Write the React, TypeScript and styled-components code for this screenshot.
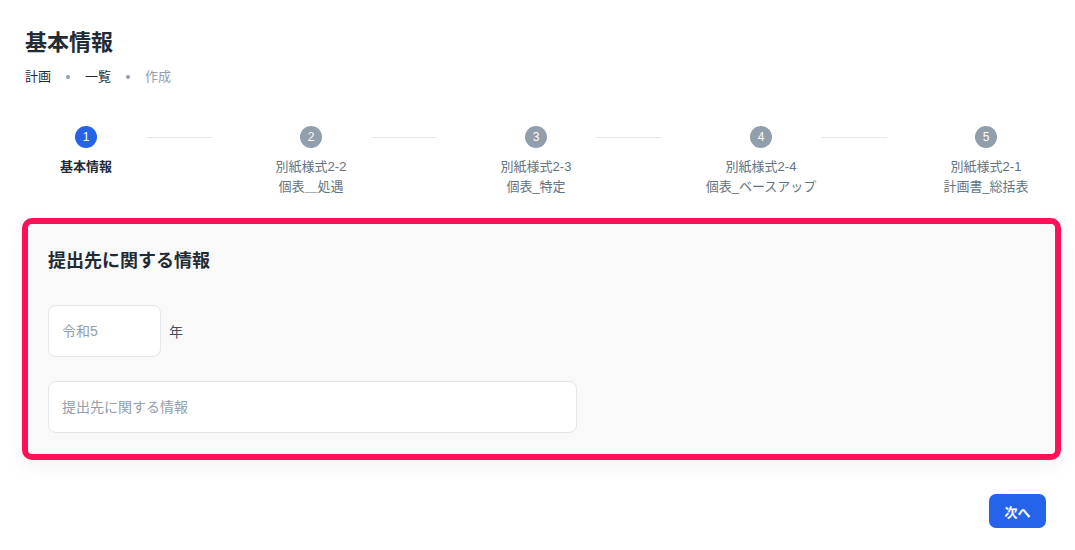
import React from 'react';
import styled, { createGlobalStyle } from 'styled-components';

const GlobalStyle = createGlobalStyle`
  html, body {
    margin: 0;
    padding: 0;
    background: #ffffff;
    font-family: "Liberation Sans", "Noto Sans CJK JP", sans-serif;
    color: #212b36;
  }
`;

interface StepData {
  lines: string[];
}

const steps: StepData[] = [
  { lines: ['基本情報'] },
  { lines: ['別紙様式2-2', '個表＿処遇'] },
  { lines: ['別紙様式2-3', '個表_特定'] },
  { lines: ['別紙様式2-4', '個表_ベースアップ'] },
  { lines: ['別紙様式2-1', '計画書_総括表'] },
];

const App: React.FC = () => (
  <>
    <GlobalStyle />
    <Page>
      <Header>
        <Title>基本情報</Title>
        <Crumbs>
          <Crumb>計画</Crumb>
          <Dot />
          <Crumb>一覧</Crumb>
          <Dot />
          <Crumb $muted>作成</Crumb>
        </Crumbs>
      </Header>
      <Stepper>
        {steps.map((s, i) => (
          <React.Fragment key={i}>
            <Step>
              <Circle $active={i === 0}>{i + 1}</Circle>
              <StepLabel $active={i === 0}>
                {s.lines.map((l) => (
                  <span key={l}>{l}</span>
                ))}
              </StepLabel>
            </Step>
            {i < steps.length - 1 && <Connector />}
          </React.Fragment>
        ))}
      </Stepper>
      <Card>
        <CardTitle>提出先に関する情報</CardTitle>
        <YearRow>
          <Input $width={113} placeholder="令和5" />
          <Unit>年</Unit>
        </YearRow>
        <Input $width={529} placeholder="提出先に関する情報" />
      </Card>
      <Footer>
        <NextButton>次へ</NextButton>
      </Footer>
    </Page>
  </>
);

const Page = styled.div`
  display: flex;
  flex-direction: column;
  width: 1075px;
  padding-top: 28px;
`;
const Header = styled.div`
  display: flex;
  flex-direction: column;
  padding-left: 25px;
`;
const Title = styled.h1`
  margin: 0;
  font-size: 22px;
  line-height: 30px;
  font-weight: 700;
  color: #212b36;
`;
const Crumbs = styled.div`
  display: flex;
  align-items: center;
  margin-top: 9px;
  height: 20px;
`;
const Crumb = styled.span<{ $muted?: boolean }>`
  font-size: 13px;
  line-height: 20px;
  color: ${(p) => (p.$muted ? '#919eab' : '#212b36')};
`;
const Dot = styled.span`
  width: 4px;
  height: 4px;
  border-radius: 50%;
  background: #919eab;
  margin: 0 15px;
`;
const Stepper = styled.div`
  display: flex;
  align-items: flex-start;
  padding-left: 26px;
  margin-top: 39px;
`;
const Step = styled.div`
  display: flex;
  flex-direction: column;
  align-items: center;
  width: 120px;
`;
const Circle = styled.div<{ $active: boolean }>`
  width: 22px;
  height: 22px;
  border-radius: 50%;
  display: flex;
  align-items: center;
  justify-content: center;
  font-size: 12px;
  color: #ffffff;
  background: ${(p) => (p.$active ? '#2563eb' : '#919eab')};
`;
const StepLabel = styled.div<{ $active: boolean }>`
  display: flex;
  flex-direction: column;
  align-items: center;
  margin-top: 9px;
  font-size: 13px;
  line-height: 20px;
  white-space: nowrap;
  font-weight: ${(p) => (p.$active ? 700 : 400)};
  color: ${(p) => (p.$active ? '#212b36' : '#637381')};
`;
const Connector = styled.div`
  width: 66px;
  height: 1px;
  margin: 11px 39px 0 0;
  background: #e6e8eb;
`;
const Card = styled.div`
  display: flex;
  flex-direction: column;
  align-items: flex-start;
  margin: 21px 14px 0 22px;
  padding: 24px 20px 21px;
  border: 6px solid #ff1158;
  border-radius: 10px;
  background: #f9f9fa;
  box-shadow: 0 6px 18px rgba(145, 158, 171, 0.12);
`;
const CardTitle = styled.h2`
  margin: 0;
  font-size: 18px;
  line-height: 26px;
  font-weight: 700;
  color: #212b36;
`;
const YearRow = styled.div`
  display: flex;
  align-items: center;
  gap: 8px;
  margin: 31px 0 24px;
`;
const Input = styled.input<{ $width: number }>`
  box-sizing: border-box;
  width: ${(p) => p.$width}px;
  height: 52px;
  padding: 0 13px;
  border: 1px solid #e3e6ea;
  border-radius: 8px;
  background: #ffffff;
  font-family: inherit;
  font-size: 14px;
  color: #212b36;
  outline: none;
  &::placeholder {
    color: #919eab;
  }
`;
const Unit = styled.span`
  font-size: 14px;
  color: #454f5b;
`;
const Footer = styled.div`
  display: flex;
  justify-content: flex-end;
  padding-right: 29px;
  margin-top: 34px;
`;
const NextButton = styled.button`
  width: 57px;
  height: 34px;
  border: none;
  border-radius: 7px;
  background: #2563eb;
  color: #ffffff;
  font-family: inherit;
  font-size: 13px;
  font-weight: 700;
  cursor: pointer;
`;

export default App;
